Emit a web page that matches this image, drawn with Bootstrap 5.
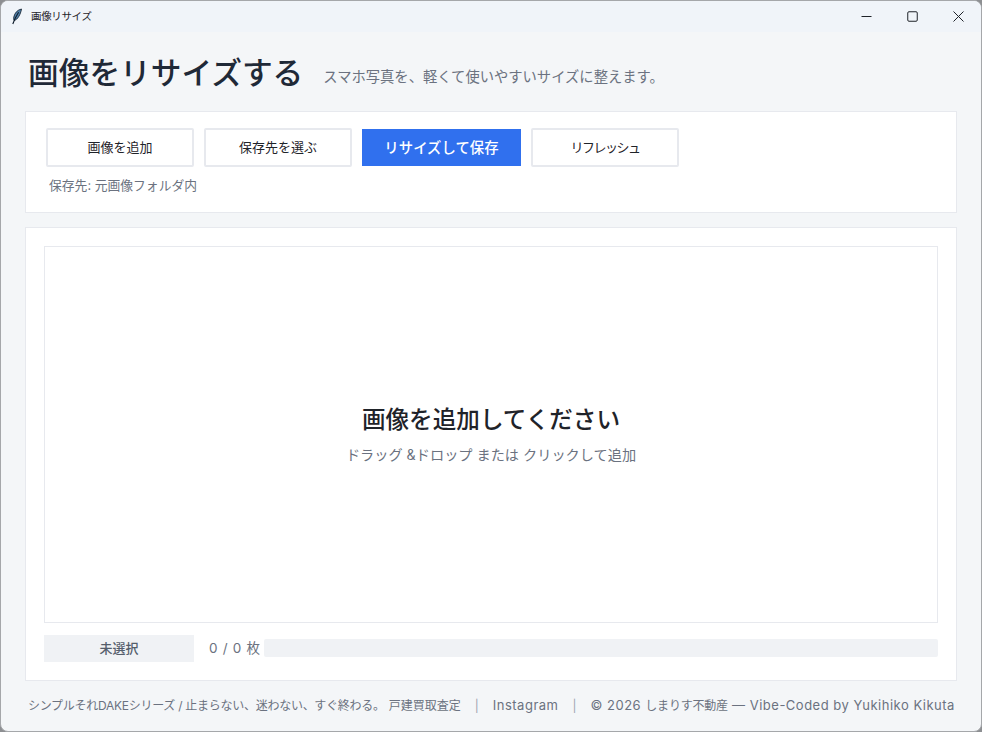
<!DOCTYPE html>
<html lang="ja">
<head>
    <meta charset="UTF-8">
    <title>画像リサイズ</title>
    <link href="https://cdn.jsdelivr.net/npm/bootstrap@5.3.2/dist/css/bootstrap.min.css" rel="stylesheet">
    <style>
        html, body { height: 732px; margin: 0; overflow: hidden; background: #8d8f92; }
        body { font-family: Inter, "Noto Sans CJK JP", sans-serif; }
        .app-window {
            height: 732px;
            background: #f4f6f8;
            border: 1px solid #a5a7aa;
            border-radius: 8px;
            overflow: hidden;
        }
        .title-bar { height: 31px; background: #f0f4f9; font-size: 10.5px; letter-spacing: -0.35px; color: #1f2329; padding-left: 10px; }
        .title-text { margin-left: 8px; }
        .win-btn { width: 46px; height: 31px; }
        .page-head { height: 79px; padding-left: 27px; padding-top: 4px; }
        .page-title { font-size: 30.7px; font-weight: 500; color: #1f2937; margin: 0; line-height: 1.2; }
        .page-sub { font-size: 14.3px; color: #6b7280; margin-left: 20px; padding-top: 6px; }
        .panel-box { background: #fff; border: 1px solid #e7e9ee; margin-left: 24px; margin-right: 24px; }
        .tool-panel { height: 102px; padding: 16px 20px 0; }
        .tool-row { gap: 10px; }
        .tool-btn {
            width: 148px; height: 39px; padding: 0;
            background: #fff; border: 2px solid #e7e9ee; border-radius: 2px;
            font-size: 13px; color: #1f2329;
        }
        .tool-btn.primary-btn { width: 159px; height: 37px; background: #3070ee; border-color: #3070ee; border-radius: 0; color: #fff; font-size: 14.4px; font-weight: 500; }
        .tight-label { letter-spacing: -1.5px; }
        .save-path { font-size: 12.8px; color: #6b7280; margin-top: 10px; padding-left: 3px; line-height: 18px; }
        .drop-panel { height: 454px; margin-top: 14px; padding: 18px 18px 0; }
        .drop-zone { height: 377px; border: 1px solid #e7e9ee; }
        .drop-title { font-size: 23.6px; font-weight: 500; color: #1f2329; line-height: 32px; }
        .drop-sub { font-size: 14.2px; color: #6b7280; line-height: 20px; margin-top: 9px; }
        .status-row { margin-top: 12px; height: 27px; }
        .status-chip { width: 150px; height: 27px; background: #f0f2f5; color: #555e6c; font-size: 13px; font-weight: 500; }
        .count-text { font-size: 13.5px; color: #6b7280; margin-left: 15px; margin-right: 3px; letter-spacing: 0.7px; white-space: nowrap; }
        .bar-track { height: 18px; margin-bottom: 2px; background: #f0f2f5; border-radius: 2px; }
        .foot-row { font-size: 12px; color: #6b7280; padding-left: 27px; padding-top: 15px; white-space: nowrap; }
        .foot-tight { letter-spacing: -0.27px; }
        .foot-latin { font-size: 13px; letter-spacing: 0.5px; }
        .foot-kana { font-size: 12px; letter-spacing: -0.2px; }
        .foot-sep { margin: 0 14px; color: #9ca3af; }
    </style>
</head>
<body>
    <div class="app-window d-flex flex-column">
        <div class="title-bar d-flex align-items-center">
            <svg width="12" height="17" viewBox="0 0 12 17">
                <path d="M10.5 1 C6.5 1.8 3.6 5 2.8 9 C2.5 10.8 2.6 12 3.2 12.6 C6.6 11.6 9.6 6.5 10.5 1 Z" fill="#4f7fa8" stroke="#0d1b2a" stroke-width="0.8"/>
                <path d="M7.6 4.2 C5.4 7.6 3.2 11.6 1.8 16" fill="none" stroke="#0d1b2a" stroke-width="1.1"/>
            </svg>
            <span class="title-text flex-grow-1">画像リサイズ</span>
            <div class="win-btn d-flex align-items-center justify-content-center">
                <svg width="11" height="11" viewBox="0 0 11 11"><path d="M0.5 5.5 H10.5" stroke="#1f2329" stroke-width="1"/></svg>
            </div>
            <div class="win-btn d-flex align-items-center justify-content-center">
                <svg width="11" height="11" viewBox="0 0 11 11"><rect x="0.75" y="0.75" width="9.5" height="9.5" rx="1.2" fill="none" stroke="#1f2329" stroke-width="1"/></svg>
            </div>
            <div class="win-btn d-flex align-items-center justify-content-center">
                <svg width="11" height="11" viewBox="0 0 11 11"><path d="M0.5 0.5 L10.5 10.5 M10.5 0.5 L0.5 10.5" stroke="#1f2329" stroke-width="1"/></svg>
            </div>
        </div>

        <div class="page-head d-flex align-items-center">
            <h1 class="page-title">画像をリサイズする</h1>
            <span class="page-sub">スマホ写真を、軽くて使いやすいサイズに整えます。</span>
        </div>

        <div class="panel-box tool-panel">
            <div class="d-flex align-items-center tool-row">
                <button type="button" class="btn tool-btn">画像を追加</button>
                <button type="button" class="btn tool-btn">保存先を選ぶ</button>
                <button type="button" class="btn tool-btn primary-btn">リサイズして保存</button>
                <button type="button" class="btn tool-btn tight-label">リフレッシュ</button>
            </div>
            <div class="save-path">保存先: 元画像フォルダ内</div>
        </div>

        <div class="panel-box drop-panel">
            <div class="drop-zone d-flex flex-column align-items-center justify-content-center">
                <div class="drop-title">画像を追加してください</div>
                <div class="drop-sub">ドラッグ &amp;ドロップ または クリックして追加</div>
            </div>
            <div class="status-row d-flex align-items-center">
                <div class="status-chip d-flex align-items-center justify-content-center">未選択</div>
                <span class="count-text">0 / 0 枚</span>
                <div class="bar-track flex-grow-1"></div>
            </div>
        </div>

        <div class="foot-row d-flex align-items-center">
            <span class="foot-tight">シンプルそれDAKEシリーズ / 止まらない、迷わない、すぐ終わる。</span>
            <span class="ms-1">戸建買取査定</span>
            <span class="foot-sep">|</span>
            <span class="foot-latin">Instagram</span>
            <span class="foot-sep">|</span>
            <span class="foot-latin">© 2026 <span class="foot-kana">しまりす不動産</span> — Vibe-Coded by Yukihiko Kikuta</span>
        </div>
    </div>
    <script src="https://cdn.jsdelivr.net/npm/bootstrap@5.3.2/dist/js/bootstrap.bundle.min.js"></script>
</body>
</html>
